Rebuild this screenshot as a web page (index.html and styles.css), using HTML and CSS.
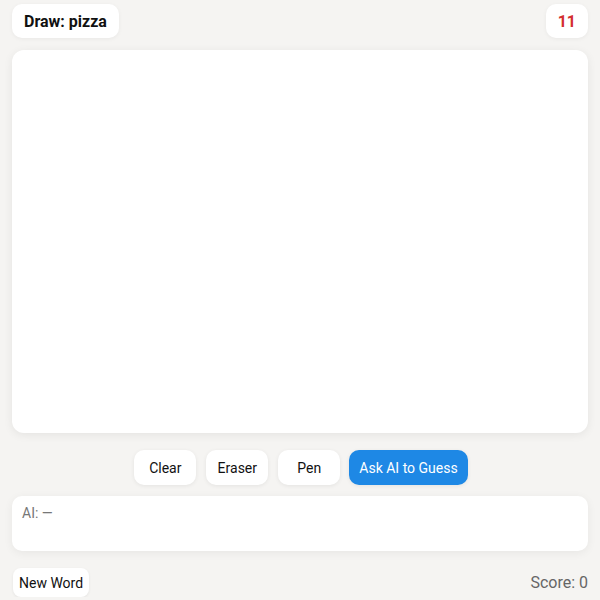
FILE: index.html
```html
<!DOCTYPE html>
<html>
<head>
<meta charset="utf-8">
<link rel="stylesheet" href="styles.css">
</head>
<body>
<div class="app">
  <header class="top">
    <div class="pill word">Draw: pizza</div>
    <div class="pill timer">11</div>
  </header>
  <div class="canvas"></div>
  <div class="controls">
    <button class="btn">Clear</button>
    <button class="btn">Eraser</button>
    <button class="btn">Pen</button>
    <button class="btn primary">Ask AI to Guess</button>
  </div>
  <div class="ai">AI: —</div>
  <footer class="bottom">
    <button class="small">New Word</button>
    <div class="score">Score: 0</div>
  </footer>
</div>
</body>
</html>
```
FILE: styles.css
```css
* { box-sizing: border-box; }
html, body { margin: 0; background: #f5f4f2; }
body { font-family: Roboto, "Liberation Sans", sans-serif; color: #111; }
.app { padding: 4px 12px 0; display: flex; flex-direction: column; }
.top { display: flex; justify-content: space-between; height: 34px; }
.pill {
  background: #fff; border-radius: 10px; height: 34px;
  display: flex; align-items: center; padding: 0 12px;
  font-weight: 700; font-size: 16px;
  box-shadow: 0 1px 4px rgba(0,0,0,0.05);
}
.timer { color: #d32f2f; padding: 0 12px; }
.canvas {
  margin-top: 12px; height: 383px; background: #fff; border-radius: 12px;
  box-shadow: 0 2px 10px rgba(0,0,0,0.07);
}
.controls { margin-top: 17px; display: flex; justify-content: center; gap: 10px; padding-left: 2px; }
.btn {
  height: 35px; min-width: 62px; padding: 0 10px; border: none; border-radius: 10px;
  background: #fff; font-family: inherit; font-size: 14px; color: #111;
  box-shadow: 0 1px 4px rgba(0,0,0,0.07);
}
.btn.primary { background: #1e88e5; color: #fff; margin-left: -1px; }
.ai {
  margin-top: 11px; height: 55px; background: #fff; border-radius: 10px;
  padding: 9px 10px; font-size: 14px; color: #777;
  box-shadow: 0 2px 10px rgba(0,0,0,0.06);
}
.bottom { margin-top: 17px; display: flex; justify-content: space-between; align-items: center; }
.small {
  height: 29px; padding: 0 6px; border: none; border-radius: 8px; background: #fff;
  font-family: inherit; font-size: 14px; color: #111; margin-left: 1px;
  box-shadow: 0 1px 3px rgba(0,0,0,0.07);
}
.score { font-size: 16px; color: #666; }
```
